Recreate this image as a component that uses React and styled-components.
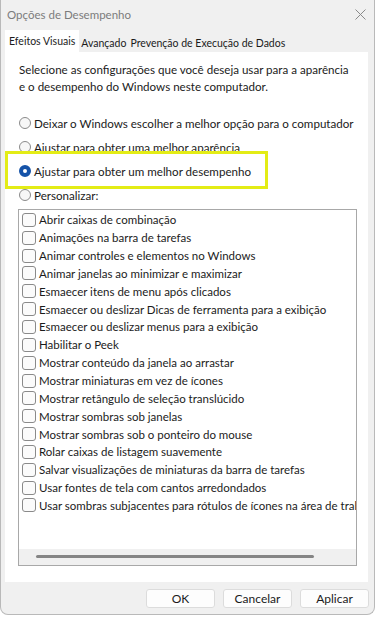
import { styled, createGlobalStyle } from "styled-components";

const GlobalStyle = createGlobalStyle`
  html, body {
    margin: 0;
    padding: 0;
    background: #ffffff;
  }
  body {
    font-family: Lato, "Liberation Sans", sans-serif;
    color: #1b1b1b;
  }
`;

const radios = [
  { label: "Deixar o Windows escolher a melhor opção para o computador" },
  { label: "Ajustar para obter uma melhor aparência" },
  { label: "Ajustar para obter um melhor desempenho", checked: true, marked: true },
  { label: "Personalizar:" },
];

const effects = [
  "Abrir caixas de combinação",
  "Animações na barra de tarefas",
  "Animar controles e elementos no Windows",
  "Animar janelas ao minimizar e maximizar",
  "Esmaecer itens de menu após clicados",
  "Esmaecer ou deslizar Dicas de ferramenta para a exibição",
  "Esmaecer ou deslizar menus para a exibição",
  "Habilitar o Peek",
  "Mostrar conteúdo da janela ao arrastar",
  "Mostrar miniaturas em vez de ícones",
  "Mostrar retângulo de seleção translúcido",
  "Mostrar sombras sob janelas",
  "Mostrar sombras sob o ponteiro do mouse",
  "Rolar caixas de listagem suavemente",
  "Salvar visualizações de miniaturas da barra de tarefas",
  "Usar fontes de tela com cantos arredondados",
  "Usar sombras subjacentes para rótulos de ícones na área de trabalho",
];

export default function App() {
  return (
    <>
      <GlobalStyle />
      <Window>
        <TitleBar>
          <Title>Opções de Desempenho</Title>
          <CloseButton aria-label="Fechar">
            <svg width="11" height="11" viewBox="0 0 11 11">
              <path d="M0.5 0.5 L10.5 10.5 M10.5 0.5 L0.5 10.5" stroke="#8a8a8a" strokeWidth="1" fill="none" />
            </svg>
          </CloseButton>
        </TitleBar>

        <Tabs>
          <Tab $active>Efeitos Visuais</Tab>
          <Tab>Avançado</Tab>
          <Tab>Prevenção de Execução de Dados</Tab>
        </Tabs>

        <Panel>
          <Description>
            Selecione as configurações que você deseja usar para a aparência
            <br />
            e o desempenho do Windows neste computador.
          </Description>

          <RadioGroup>
            {radios.map((r) => (
              <RadioRow key={r.label} $marked={r.marked}>
                <RadioDot $checked={r.checked} />
                <span>{r.label}</span>
              </RadioRow>
            ))}
          </RadioGroup>

          <ListBox>
            <ListItems>
              {effects.map((e) => (
                <CheckRow key={e}>
                  <CheckBox />
                  <span>{e}</span>
                </CheckRow>
              ))}
            </ListItems>
            <ScrollTrack>
              <ScrollThumb />
            </ScrollTrack>
          </ListBox>
        </Panel>

        <Footer>
          <Button>OK</Button>
          <Button>Cancelar</Button>
          <Button>Aplicar</Button>
        </Footer>
      </Window>
    </>
  );
}

const Window = styled.div`
  width: 375px;
  height: 615px;
  box-sizing: border-box;
  background: #f0f0f0;
  border: 1px solid #b9b9b9;
  border-top: none;
  border-radius: 0 0 8px 8px;
  display: flex;
  flex-direction: column;
  overflow: hidden;
`;

const TitleBar = styled.div`
  height: 28px;
  display: flex;
  align-items: center;
  justify-content: space-between;
  padding: 0 8px 2px 6px;
`;

const Title = styled.div`
  font-size: 11.5px;
  color: #7c7c7c;
`;

const CloseButton = styled.div`
  display: flex;
  align-items: center;
`;

const Tabs = styled.div`
  display: flex;
  align-items: flex-end;
  height: 22px;
  padding-left: 4px;
`;

const Tab = styled.div`
  height: ${(p) => (p.$active ? "22px" : "19px")};
  padding: 0 ${(p) => (p.$active ? "4px" : "2px")};
  display: flex;
  align-items: center;
  font-size: 10.5px;
  color: #1b1b1b;
  background: ${(p) => (p.$active ? "#ffffff" : "transparent")};
`;

const Panel = styled.div`
  margin: 0 6px 0 4px;
  height: 530px;
  background: #ffffff;
  padding: 10px 0 0 14px;
  box-sizing: border-box;
  display: flex;
  flex-direction: column;
`;

const Description = styled.p`
  margin: 0;
  font-size: 11.6px;
  line-height: 16.5px;
  white-space: nowrap;
`;

const RadioGroup = styled.div`
  margin-top: 16px;
  display: flex;
  flex-direction: column;
`;

const RadioRow = styled.div`
  position: relative;
  height: 24px;
  display: flex;
  align-items: center;
  gap: 3px;
  font-size: 11.6px;
  white-space: nowrap;

  ${(p) =>
    p.$marked &&
    `
    &::after {
      content: "";
      position: absolute;
      left: -14px;
      top: -8px;
      width: 263px;
      height: 38px;
      box-sizing: border-box;
      border: 3px solid #e3ec16;
      pointer-events: none;
    }
  `}
`;

const RadioDot = styled.span`
  width: 12px;
  height: 12px;
  box-sizing: border-box;
  border-radius: 50%;
  flex-shrink: 0;
  border: ${(p) => (p.$checked ? "4px solid #1553a8" : "1px solid #8a8a8a")};
  background: ${(p) => (p.$checked ? "#ffffff" : "#f7f7f7")};
`;

const ListBox = styled.div`
  margin: 2px 0 0 -1px;
  width: 339px;
  height: 357px;
  box-sizing: border-box;
  border: 1px solid #a8a8a8;
  display: flex;
  flex-direction: column;
  overflow: hidden;
`;

const ListItems = styled.div`
  flex: 1;
  padding: 1px 0 0 3px;
  display: flex;
  flex-direction: column;
`;

const CheckRow = styled.div`
  height: 17.85px;
  display: flex;
  align-items: center;
  gap: 3px;
  font-size: 11.5px;
  white-space: nowrap;
`;

const CheckBox = styled.span`
  width: 12px;
  height: 12px;
  flex-shrink: 0;
  border: 1px solid #8a8a8a;
  border-radius: 3px;
  background: #fbfbfb;
`;

const ScrollTrack = styled.div`
  height: 16px;
  background: #f0f0f0;
  display: flex;
  align-items: center;
  padding: 0 42px 2px 17px;
  box-sizing: border-box;
`;

const ScrollThumb = styled.div`
  flex: 1;
  height: 3px;
  border-radius: 2px;
  background: #858585;
`;

const Footer = styled.div`
  flex: 1;
  display: flex;
  justify-content: flex-end;
  align-items: flex-start;
  gap: 8px;
  padding: 7px 5px 0 0;
`;

const Button = styled.button`
  width: 69px;
  height: 19px;
  padding: 0;
  font-family: inherit;
  font-size: 12px;
  color: #1b1b1b;
  background: #fdfdfd;
  border: 1px solid #dcdcdc;
  border-radius: 3px;
`;
